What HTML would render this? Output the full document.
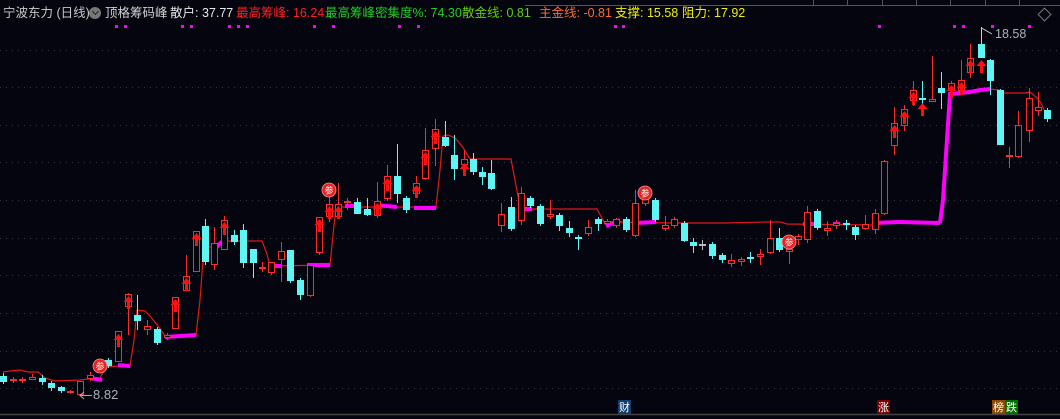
<!DOCTYPE html>
<html><head><meta charset="utf-8"><style>
html,body{margin:0;padding:0;background:#05050f;width:1060px;height:419px;overflow:hidden;}
.t{position:absolute;top:5px;font:12.5px "Liberation Sans","Noto Sans CJK SC",sans-serif;white-space:nowrap;line-height:16px}
.lb{position:absolute;top:400px;width:13px;height:14px;font:11px "Noto Sans CJK SC",sans-serif;color:#fff;text-align:center;line-height:14px}
</style></head><body>
<svg id="s" width="1060" height="419" style="position:absolute;left:0;top:0"></svg>
<div class="t" style="left:3px;color:#c8c8c8">宁波东力 (日线)</div>
<div style="position:absolute;left:89px;top:7px;width:12px;height:12px;border-radius:50%;background:#777"></div>
<div style="position:absolute;left:92px;top:8px;width:4px;height:4px;border-right:1.5px solid #222;border-bottom:1.5px solid #222;transform:translate(1px,1px) rotate(45deg)"></div>
<div class="t" style="left:105px;color:#d0d0d0">顶格筹码峰</div>
<div class="t" style="left:170px;color:#e8e8e8">散户: 37.77</div>
<div class="t" style="left:236px;color:#ff2020">最高筹峰: 16.24</div>
<div class="t" style="left:325px;color:#20d020">最高筹峰密集度%: 74.30</div>
<div class="t" style="left:462px;color:#60d010">散金线: 0.81</div>
<div class="t" style="left:539px;color:#ff6a30">主金线: -0.81</div>
<div class="t" style="left:615px;color:#f0f000">支撑: 15.58</div>
<div class="t" style="left:682px;color:#f0f000">阻力: 17.92</div>
<div class="t" style="left:93px;top:387px;color:#aab0bc;font-size:13px">8.82</div>
<div class="t" style="left:995px;top:26px;color:#aab0bc;font-size:12.5px">18.58</div>
<div class="lb" style="left:618px;background:#123d70">财</div>
<div class="lb" style="left:877px;background:#7a0000">涨</div>
<div class="lb" style="left:992px;background:#8a4800">榜</div>
<div class="lb" style="left:1005px;background:#007000">跌</div>
<script>
var s=document.getElementById('s'),h='';
function L(x1,y1,x2,y2,c,w,d){h+='<line x1="'+x1+'" y1="'+y1+'" x2="'+x2+'" y2="'+y2+'" stroke="'+c+'" stroke-width="'+(w||1)+'"'+(d?' stroke-dasharray="'+d+'"':'')+'/>';}
[50,87,125,162,200,238,275,313,351,388].forEach(function(y){L(0,y+.5,1060,y+.5,'#3a3a44',1,'1 5');});
L(525,5.5,1060,5.5,'#555');[813,847,882,916,950,985,1019].forEach(function(x){L(x+.5,0,x+.5,5,'#555');});
L(0,414.5,1060,414.5,'#444',1.5);
h+='<rect x="1040" y="10" width="9" height="9" fill="none" stroke="#777" transform="rotate(45 1044.5 14.5)"/>';
var R='#ff2a2a',C='#5ff5f5';
var d=[
[3,376,382,373,384,'c'],[13,379,381,377,383,'x'],[22,379,381,377,383,'x'],[32,377,380,374,380,'r'],[42,378,382,375,385,'c'],[51,383,388,381,391,'c'],[61,387,391,386,393,'c'],[70,391,393,390,394,'x'],[80,381,395,381,395,'r'],[90,375,379,372,381,'r'],
[108,360,366,358,368,'c'],[118,331,362,331,362,'r',334],[128,294,307,293,335,'r',296],[137,315,321,295,330,'c'],[147,326,330,320,335,'r'],[157,329,343,327,345,'c'],[167,335,338,333,340,'r'],[175,297,329,297,329,'r',299],[186,276,291,255,291,'r',278],[196,231,272,231,272,'r',233],
[205,226,262,219,265,'c'],[214,243,265,227,270,'r'],[224,220,250,216,250,'r',222],[234,235,242,230,245,'c'],[243,230,263,224,268,'c'],[253,249,263,249,278,'c'],[262,267,269,262,272,'x'],[271,262,273,262,275,'r'],[281,251,260,242,282,'r'],[290,250,281,250,283,'c'],
[300,280,295,278,300,'c'],[310,265,296,265,297,'r'],[319,217,253,217,255,'r',219],[329,204,217,197,222,'r',206],[338,204,217,183,217,'r',206],[347,201,203,198,210,'x'],[357,202,214,198,214,'c'],[367,209,215,198,216,'c'],[377,201,216,182,218,'r',203],[387,176,199,165,201,'r',178],
[397,176,194,144,203,'c'],[406,198,210,196,213,'c'],[416,183,194,176,197,'r',185],[425,150,179,128,180,'r',152],[435,129,149,119,166,'r',131],[445,137,146,121,147,'c'],[454,155,169,135,180,'c'],[464,159,165,150,170,'r',163],[473,159,172,153,175,'c'],[482,172,177,167,185,'c'],
[491,173,189,160,190,'c'],[501,214,226,203,232,'r'],[511,207,229,197,231,'c'],[521,193,221,187,225,'r'],[530,198,206,196,208,'c'],[540,206,224,204,226,'c'],[550,214,217,200,219,'r'],[559,215,226,213,231,'c'],[569,228,233,221,237,'c'],[578,237,239,235,250,'cx'],
[588,227,234,220,236,'r'],[598,219,224,217,231,'c'],[607,221,224,219,227,'r'],[616,219,226,218,228,'r'],[626,219,230,217,232,'c'],[635,203,236,190,237,'r'],[645,199,204,195,206,'r'],[655,200,220,198,222,'c'],[665,225,229,216,231,'r'],[674,219,226,217,228,'r'],
[684,223,241,221,242,'c'],[693,242,246,238,253,'c'],[702,244,246,240,250,'g'],[712,244,256,242,259,'c'],[722,255,260,253,263,'c'],[731,260,264,254,267,'r'],[741,259,262,257,266,'r'],[750,257,259,252,263,'cx'],[760,254,257,249,265,'r'],[770,238,253,220,254,'r'],
[779,238,250,228,252,'c'],[789,249,252,249,264,'r'],[798,236,240,234,245,'r'],[807,212,240,206,243,'r'],[817,211,228,209,230,'c'],[827,228,231,221,236,'r'],[836,223,226,220,229,'r'],[846,223,225,220,230,'cx'],[855,227,235,225,240,'c'],[865,224,229,215,230,'r'],
[875,213,230,209,234,'r'],[884,161,214,160,215,'r'],[894,123,146,107,155,'r',125],[904,109,126,105,131,'r',111],[913,90,101,81,106,'r',92],[922,98,100,81,112,'cx',103],[932,99,102,56,102,'r'],[941,88,93,72,109,'c'],[951,83,90,81,92,'r',85],[961,80,91,60,92,'r',82],
[970,58,73,44,78,'r',60],[981,44,58,27,58,'c',60],[990,60,81,59,95,'c'],[1000,90,145,89,145,'c'],[1009,155,157,147,168,'x'],[1018,125,157,111,158,'r'],[1029,98,131,88,142,'r'],[1038,107,111,92,116,'r'],[1047,110,119,108,122,'c']];
var p=[[3,372],[10,371],[20,370],[28,372],[38,372],[45,378],[55,381],[80,380],[88,379],[96,378],[100,378],[106,367],[118,366],[130,366],[134,340],[137,310],[145,311],[150,316],[158,326],[165,336],[196,335],[200,300],[204,247],[210,247],[224,241],[262,241],[267,254],[270,266],[330,265],[333,235],[336,207],[398,207],[436,207],[440,170],[443,136],[448,135],[455,138],[462,146],[470,159],[487,159],[511,159],[514,175],[518,196],[520,209],[592,209],[597,209],[605,224],[620,222],[672,223],[725,223],[765,222],[780,222],[787,224],[872,225],[900,222],[940,222],[944,180],[950,94],[990,89],[1000,90],[1004,93],[1025,93],[1030,92],[1036,97],[1041,103],[1046,114]];
h+='<polyline fill="none" stroke="#e01818" stroke-width="1.2" points="'+p.map(function(a){return a.join(',')}).join(' ')+'"/>';
var M='#ff00ff';
[[[90,378],[102,380]],[[118,365],[130,366]],[[165,337],[196,335]],[[213,250],[224,240]],[[270,266],[282,266]],[[307,265],[330,265]],[[345,206],[356,206]],[[376,205],[397,207]],[[414,208],[436,208]],[[519,209],[532,209]],[[606,226],[620,220]],[[634,223],[656,222]],[[803,224],[816,224]],[[833,224],[840,224]],[[872,223],[900,222]],[[900,222],[940,223]]].forEach(function(q){L(q[0][0],q[0][1],q[1][0],q[1][1],M,4);});
h+='<polyline fill="none" stroke="'+M+'" stroke-width="4" points="940,223 943,200 950,94 960,93 970,92 980,90 991,89"/>';
d.forEach(function(c){
 var x=c[0],t=c[1],b=c[2],hi=c[3],lo=c[4],k=c[5];
 var col=(k=='c'||k=='cx')?C:(k=='g'?'#bbb':R);
 L(x+.5,hi,x+.5,lo,col,1);
 if(k=='c'){h+='<rect x="'+(x-3)+'" y="'+t+'" width="7" height="'+Math.max(b-t,2)+'" fill="'+C+'"/>';}
 else if(k=='r'){h+='<rect x="'+(x-2.5)+'" y="'+(t+.5)+'" width="6" height="'+Math.max(b-t-1,2)+'" fill="#05050f" stroke="'+R+'"/>';}
 else {L(x-3,(t+b)/2,x+4,(t+b)/2,col,2);}
 if(c[6]){var a=c[6];h+='<path d="M'+(x+.5)+' '+a+' L'+(x+5.5)+' '+(a+6)+' L'+(x+2)+' '+(a+6)+' L'+(x+2)+' '+(a+13)+' L'+(x-1)+' '+(a+13)+' L'+(x-1)+' '+(a+6)+' L'+(x-4.5)+' '+(a+6)+' Z" fill="#ff1010"/>';}
});
[[100,366],[329,190],[645,193],[789,242]].forEach(function(b){h+='<circle cx="'+b[0]+'" cy="'+b[1]+'" r="7" fill="#e82020" stroke="#ff9090" stroke-width="0.8"/><text x="'+b[0]+'" y="'+(b[1]+3.5)+'" font-size="9" fill="#fff" text-anchor="middle" font-family="Noto Sans CJK SC,sans-serif">参</text>';});
[116,125,182,191,229,238,247,314,333,399,418,615,623,879,954,963,992,1029].forEach(function(x){h+='<rect x="'+(x-1)+'" y="25" width="3" height="3" fill="'+M+'"/>';});
L(80,395.5,92,395.5,'#aaa');h+='<path d="M84 392 L80 395.5 L84 399" fill="none" stroke="#aaa"/>';
L(981.5,27,981.5,44,'#ccc');h+='<path d="M981.5 28 L985 30 L992 34" fill="none" stroke="#ccc"/>';
s.innerHTML=h;
</script>
</body></html>
